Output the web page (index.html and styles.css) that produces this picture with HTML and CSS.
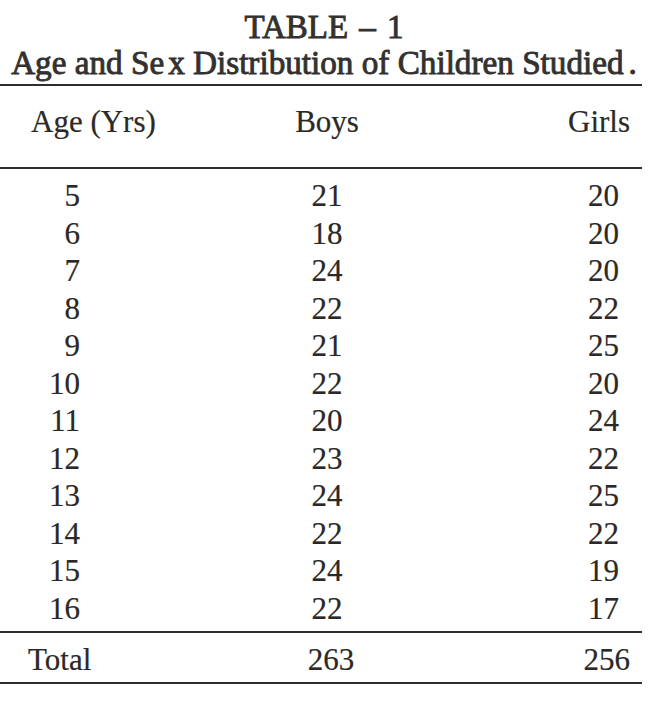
FILE: index.html
```html
<!DOCTYPE html>
<html>
<head>
<meta charset="utf-8">
<title>Table 1</title>
<link rel="stylesheet" href="styles.css">
</head>
<body>
<div class="page">
  <div class="caption">
    <div class="t1">TABLE <span class="dash">–</span> 1</div>
    <div class="t2">Age and Se<span class="kx">x</span> Distribution of Children Studied<span class="kd">.</span></div>
  </div>
  <div class="rule r1"></div>
  <div class="row head">
    <div class="c1">Age (Yrs)</div>
    <div class="c2">Boys</div>
    <div class="c3">Girls</div>
  </div>
  <div class="rule r2"></div>
  <div class="body">
    <div class="row"><div class="c1">5</div><div class="c2">21</div><div class="c3">20</div></div>
    <div class="row"><div class="c1">6</div><div class="c2">18</div><div class="c3">20</div></div>
    <div class="row"><div class="c1">7</div><div class="c2">24</div><div class="c3">20</div></div>
    <div class="row"><div class="c1">8</div><div class="c2">22</div><div class="c3">22</div></div>
    <div class="row"><div class="c1">9</div><div class="c2">21</div><div class="c3">25</div></div>
    <div class="row"><div class="c1">10</div><div class="c2">22</div><div class="c3">20</div></div>
    <div class="row"><div class="c1">11</div><div class="c2">20</div><div class="c3">24</div></div>
    <div class="row"><div class="c1">12</div><div class="c2">23</div><div class="c3">22</div></div>
    <div class="row"><div class="c1">13</div><div class="c2">24</div><div class="c3">25</div></div>
    <div class="row"><div class="c1">14</div><div class="c2">22</div><div class="c3">22</div></div>
    <div class="row"><div class="c1">15</div><div class="c2">24</div><div class="c3">19</div></div>
    <div class="row"><div class="c1">16</div><div class="c2">22</div><div class="c3">17</div></div>
  </div>
  <div class="rule r3"></div>
  <div class="row total">
    <div class="c1">Total</div>
    <div class="c2">263</div>
    <div class="c3">256</div>
  </div>
  <div class="rule r4"></div>
</div>
</body>
</html>
```
FILE: styles.css
```css
html, body {
  margin: 0;
  padding: 0;
  background: #ffffff;
}

.page {
  width: 642px;
  font-family: "Liberation Serif", "Times New Roman", serif;
  color: #2b2927;
}

.caption {
  padding-top: 10px;
  text-align: center;
  color: #33312f;
  -webkit-text-stroke: 0.9px #33312f;
}

.t1 {
  font-size: 33px;
  line-height: 35px;
  padding-left: 6px;
}

.dash {
  margin: 0 3px;
}

.t2 {
  font-size: 33.2px;
  line-height: 35px;
  white-space: nowrap;
  padding-left: 6px;
}

.kx {
  margin-left: 4px;
}

.kd {
  margin-left: 5px;
}

.rule {
  height: 2px;
  background: #2f2d2b;
}

.r1 { margin-top: 4px; }

.row {
  display: grid;
  grid-template-columns: 200px 254px 188px;
  font-size: 31px;
  line-height: 37.5px;
  -webkit-text-stroke: 0.2px #2b2927;
}

.head {
  padding-top: 17px;
  padding-bottom: 26.7px;
}

.head .c1 { padding-left: 31px; }
.head .c2 { text-align: center; }
.head .c3 { text-align: right; padding-right: 12px; }

.body {
  padding-top: 8px;
  padding-bottom: 4px;
}

.body .c1 { text-align: right; padding-right: 120px; }
.body .c2 { text-align: center; }
.body .c3 { text-align: right; padding-right: 23px; }

.total {
  padding-top: 8px;
  padding-bottom: 3px;
}

.total .c1 { padding-left: 28px; }
.total .c2 { text-align: center; padding-left: 8px; }
.total .c3 { text-align: right; padding-right: 12px; }
```
